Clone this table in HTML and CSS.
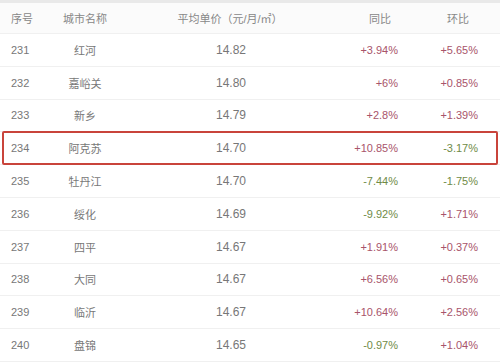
FILE: index.html
```html
<!DOCTYPE html>
<html lang="zh-CN">
<head>
    <meta charset="UTF-8">
    <title>城市房租排名</title>
    <link rel="stylesheet" href="styles.css">
</head>
<body>
    <div class="tabela">
        <div class="linha cabecalho">
            <div class="c-num">序号</div>
            <div class="c-cidade">城市名称</div>
            <div class="c-preco">平均单价（元/月/㎡）</div>
            <div class="c-tb">同比</div>
            <div class="c-hb">环比</div>
        </div>
        <div class="linha">
            <div class="c-num">231</div><div class="c-cidade">红河</div><div class="c-preco">14.82</div>
            <div class="c-tb up">+3.94%</div><div class="c-hb up">+5.65%</div>
        </div>
        <div class="linha">
            <div class="c-num">232</div><div class="c-cidade">嘉峪关</div><div class="c-preco">14.80</div>
            <div class="c-tb up">+6%</div><div class="c-hb up">+0.85%</div>
        </div>
        <div class="linha">
            <div class="c-num">233</div><div class="c-cidade">新乡</div><div class="c-preco">14.79</div>
            <div class="c-tb up">+2.8%</div><div class="c-hb up">+1.39%</div>
        </div>
        <div class="linha destaque">
            <div class="c-num">234</div><div class="c-cidade">阿克苏</div><div class="c-preco">14.70</div>
            <div class="c-tb up">+10.85%</div><div class="c-hb down">-3.17%</div>
        </div>
        <div class="linha">
            <div class="c-num">235</div><div class="c-cidade">牡丹江</div><div class="c-preco">14.70</div>
            <div class="c-tb down">-7.44%</div><div class="c-hb down">-1.75%</div>
        </div>
        <div class="linha">
            <div class="c-num">236</div><div class="c-cidade">绥化</div><div class="c-preco">14.69</div>
            <div class="c-tb down">-9.92%</div><div class="c-hb up">+1.71%</div>
        </div>
        <div class="linha">
            <div class="c-num">237</div><div class="c-cidade">四平</div><div class="c-preco">14.67</div>
            <div class="c-tb up">+1.91%</div><div class="c-hb up">+0.37%</div>
        </div>
        <div class="linha">
            <div class="c-num">238</div><div class="c-cidade">大同</div><div class="c-preco">14.67</div>
            <div class="c-tb up">+6.56%</div><div class="c-hb up">+0.65%</div>
        </div>
        <div class="linha">
            <div class="c-num">239</div><div class="c-cidade">临沂</div><div class="c-preco">14.67</div>
            <div class="c-tb up">+10.64%</div><div class="c-hb up">+2.56%</div>
        </div>
        <div class="linha">
            <div class="c-num">240</div><div class="c-cidade">盘锦</div><div class="c-preco">14.65</div>
            <div class="c-tb down">-0.97%</div><div class="c-hb up">+1.04%</div>
        </div>
    </div>
</body>
</html>
```

FILE: styles.css
```css
body {
    margin: 0;
    background: #fff;
    font-family: "Liberation Sans", "Noto Sans CJK SC", sans-serif;
    font-size: 11px;
    color: #777;
}
.tabela {
    width: 500px;
    border-top: 3px solid #e9e9e9;
}
.linha {
    display: grid;
    grid-template-columns: 50px 70px 186px 114px 80px;
    align-items: center;
    height: 32.8px;
    border-bottom: 1px solid #f0f0f0;
    box-sizing: border-box;
    position: relative;
}
.cabecalho {
    height: 31px;
    background: #fbfbfb;
    color: #888;
}
.c-num {
    padding-left: 11px;
}
.c-cidade {
    text-align: center;
}
.c-preco {
    text-align: right;
    padding-right: 60px;
    font-size: 12px;
}
.c-tb, .c-hb {
    text-align: right;
    padding-right: 22px;
}
.cabecalho .c-preco {
    text-align: center;
    padding: 0 0 0 34px;
    font-size: 11px;
}
.cabecalho .c-tb {
    text-align: center;
    padding: 0 0 0 34px;
}
.cabecalho .c-hb {
    text-align: center;
    padding: 0 4px 0 0;
}
.up {
    color: #a8546a;
}
.down {
    color: #6f8b47;
}
/* moldura vermelha por cima da linha */
.destaque::after {
    content: "";
    position: absolute;
    top: -1px;
    bottom: -1px;
    left: 2px;
    right: 2px;
    border: 2px solid #c9443b;
    border-radius: 2px;
}
```
